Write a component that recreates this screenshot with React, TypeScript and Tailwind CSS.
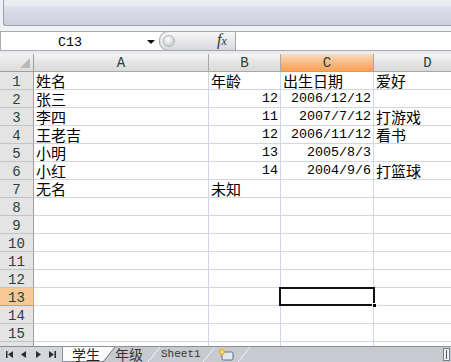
import React from "react";

const MONO = "font-['Liberation_Mono','Noto_Sans_CJK_SC',monospace]";
const CJK = "font-['Noto_Sans_CJK_SC','Noto_Sans',sans-serif]";

type Cell = { v: string; num?: boolean };

const data: Cell[][] = [
  [{ v: "姓名" }, { v: "年龄" }, { v: "出生日期" }, { v: "爱好" }],
  [{ v: "张三" }, { v: "12", num: true }, { v: "2006/12/12", num: true }, { v: "" }],
  [{ v: "李四" }, { v: "11", num: true }, { v: "2007/7/12", num: true }, { v: "打游戏" }],
  [{ v: "王老吉" }, { v: "12", num: true }, { v: "2006/11/12", num: true }, { v: "看书" }],
  [{ v: "小明" }, { v: "13", num: true }, { v: "2005/8/3", num: true }, { v: "" }],
  [{ v: "小红" }, { v: "14", num: true }, { v: "2004/9/6", num: true }, { v: "打篮球" }],
  [{ v: "无名" }, { v: "未知" }, { v: "" }, { v: "" }],
];

const colW = ["w-[175px]", "w-[72px]", "w-[93px]", "w-[108px]"];
const colNames = ["A", "B", "C", "D"];

function CellView({ c, w, selected }: { c?: Cell; w: string; selected?: boolean }) {
  return (
    <div
      className={`${w} shrink-0 h-full relative flex items-end pb-[1px] border-r border-b border-[#d0d7e5] ${
        c?.num ? "justify-end pr-[2px]" : "justify-start pl-[2px]"
      }`}
    >
      {c && c.v ? (
        c.num ? (
          <span className={`${MONO} text-[13.33px] leading-[15px] text-black`}>{c.v}</span>
        ) : (
          <span className={`${CJK} text-[15px] leading-[15px] text-black whitespace-nowrap`}>{c.v}</span>
        )
      ) : null}
      {selected ? (
        <div className="absolute left-[-2px] top-[-1px] right-[-2px] bottom-[-1px] border-2 border-[#111] z-10">
          <div className="absolute right-[-4px] bottom-[-4px] w-[5px] h-[5px] bg-black border border-white" />
        </div>
      ) : null}
    </div>
  );
}

function Arrow({ d }: { d: string }) {
  return (
    <svg width="9" height="9" viewBox="0 0 9 9">
      <path d={d} fill="#2d2d2d" />
    </svg>
  );
}

function Slant({ fill, stroke }: { fill: string; stroke: string }) {
  return (
    <svg width="12" height="15" viewBox="0 0 12 15" className="shrink-0">
      <polygon points="0,0 12,0 0,15" fill={fill} />
      <line x1="0" y1="15" x2="12" y2="0" stroke={stroke} strokeWidth="1" />
    </svg>
  );
}

export default function App() {
  return (
    <div className="w-[451px] h-[362px] overflow-hidden bg-[#eceef2] flex flex-col select-none">
      {/* ribbon bottom */}
      <div className="h-[26px] shrink-0 pl-[3px] bg-[#eef0f3]">
        <div className="h-full border-l border-b border-[#9ba0ab] rounded-bl-[3px] bg-[linear-gradient(to_bottom,#e9eff0_0%,#e7ecef_20%,#dcdfe9_30%,#ccd0de_100%)]" />
      </div>
      <div className="h-[5px] shrink-0 bg-[#f1f2f4]" />
      {/* formula bar */}
      <div className="h-[20px] shrink-0 flex border-t border-b border-[#a9abb0] bg-white">
        <div className="w-[159px] shrink-0 flex items-center border-l border-[#a9abb0] relative">
          <span className={`${MONO} text-[13.33px] leading-none text-black absolute left-[57px] top-[4px]`}>C13</span>
          <svg width="8" height="5" viewBox="0 0 8 5" className="absolute left-[146px] top-[8px]">
            <polygon points="0,0 8,0 4,4" fill="#111" />
          </svg>
        </div>
        <div className="w-[77px] shrink-0 rounded-l-[9px] border border-[#a2a5ab] bg-[linear-gradient(to_bottom,#f6f6f6,#d9dadd)] relative -mt-[1px] h-[20px]">
          <div className="absolute left-[3px] top-[3px] w-[12px] h-[12px] rounded-full bg-[radial-gradient(circle_at_40%_35%,#ffffff,#b9bcc2)] border border-[#b3b6bb]" />
          <span className="absolute left-[57px] top-[-1px] font-['Liberation_Serif',serif] italic text-[16px] leading-[18px] text-[#333]">
            f<span className="text-[12px]">x</span>
          </span>
        </div>
        <div className="flex-1 bg-white" />
      </div>
      <div className="h-[3px] shrink-0 bg-[#eaebee]" />
      {/* grid */}
      <div className="flex-1 flex flex-col bg-white overflow-hidden">
        {/* header */}
        <div className="h-[18px] shrink-0 flex">
          <div className="w-[34px] shrink-0 h-full border-r border-b border-[#9e9e9e] bg-[linear-gradient(to_bottom,#f0f0f0,#dcdcdc)] relative">
            <svg width="10" height="10" viewBox="0 0 10 10" className="absolute right-[3px] bottom-[3px]">
              <polygon points="10,0 10,10 0,10" fill="#b9b9b9" />
            </svg>
          </div>
          {colNames.map((n, i) => (
            <div
              key={n}
              className={`${colW[i]} shrink-0 h-full flex items-center justify-center border-r border-b ${
                n === "C"
                  ? "border-[#f29436] bg-[linear-gradient(to_bottom,#fbdcbd,#f8b57b_60%,#f7a25b)]"
                  : "border-[#a8a8a8] bg-[linear-gradient(to_bottom,#f6f6f6,#e4e4e4_50%,#dadada)]"
              }`}
            >
              <span className={`${MONO} text-[14px] leading-none text-[#27413e] pt-[1px]`}>{n}</span>
            </div>
          ))}
        </div>
        {Array.from({ length: 16 }).map((_, r) => {
          const rowNum = r + 1;
          const sel = rowNum === 13;
          return (
            <div key={r} className="h-[18px] shrink-0 flex">
              <div
                className={`w-[34px] shrink-0 h-full flex items-center justify-center border-r border-b ${
                  sel ? "bg-[#f8c995] border-[#ee9749]" : "bg-[#e4e4e4] border-[#9e9e9e] border-b-[#c3c3c3]"
                }`}
              >
                <span className={`${MONO} text-[14px] leading-none text-[#27413e] pt-[2px]`}>{rowNum}</span>
              </div>
              {colW.map((w, c) => (
                <CellView key={c} c={data[r]?.[c]} w={w} selected={sel && c === 2} />
              ))}
            </div>
          );
        })}
      </div>
      {/* sheet tabs */}
      <div className="h-[16px] shrink-0 flex bg-[#c7cacf] border-t border-[#8d9096] relative">
        <div className="w-[63px] shrink-0 h-full flex items-center justify-around px-[2px] bg-[#d3d6da] border-r border-[#8d9096]">
          <Arrow d="M1,1 H2.5 V8 H1 Z M8,1 L3,4.5 L8,8 Z" />
          <Arrow d="M7,1 L2,4.5 L7,8 Z" />
          <Arrow d="M2,1 L7,4.5 L2,8 Z" />
          <Arrow d="M1,1 L6,4.5 L1,8 Z M6.5,1 H8 V8 H6.5 Z" />
        </div>
        <div className="w-[40px] shrink-0 h-full flex items-center bg-[#fbfbfb] pl-[9px] border-b border-[#8d9096]">
          <span className={`${CJK} text-[14px] leading-[15px] text-[#222] whitespace-nowrap`}>学生</span>
        </div>
        <Slant fill="#fbfbfb" stroke="#6f7278" />
        <div className="w-[33px] shrink-0 h-full flex items-center">
          <span className={`${CJK} text-[14px] leading-[15px] text-[#333] whitespace-nowrap`}>年级</span>
        </div>
        <Slant fill="#c7cacf" stroke="#f4f4f4" />
        <div className="w-[43px] shrink-0 h-full flex items-center pl-[1px]">
          <span className={`${MONO} text-[11px] leading-[13px] text-[#333]`}>Sheet1</span>
        </div>
        <Slant fill="#c7cacf" stroke="#f4f4f4" />
        <div className="w-[23px] shrink-0 h-full flex items-center pl-[3px]">
          <svg width="17" height="14" viewBox="0 0 17 14">
            <rect x="4" y="4" width="11" height="8" rx="1.5" fill="#dfe8f3" stroke="#5a6f8a" strokeWidth="1" />
            <circle cx="4" cy="4" r="3" fill="#f5b21a" />
            <circle cx="4" cy="4" r="1.4" fill="#fff2b0" />
          </svg>
        </div>
        <Slant fill="#c7cacf" stroke="#f4f4f4" />
        <div className="flex-1" />
        <div className="w-[7px] h-[13px] mt-[1px] mr-[1px] border border-[#7b7e84] bg-[#eef0f3] flex items-center justify-center">
          <div className="w-[1px] h-[9px] bg-[#555]" />
        </div>
      </div>
    </div>
  );
}
